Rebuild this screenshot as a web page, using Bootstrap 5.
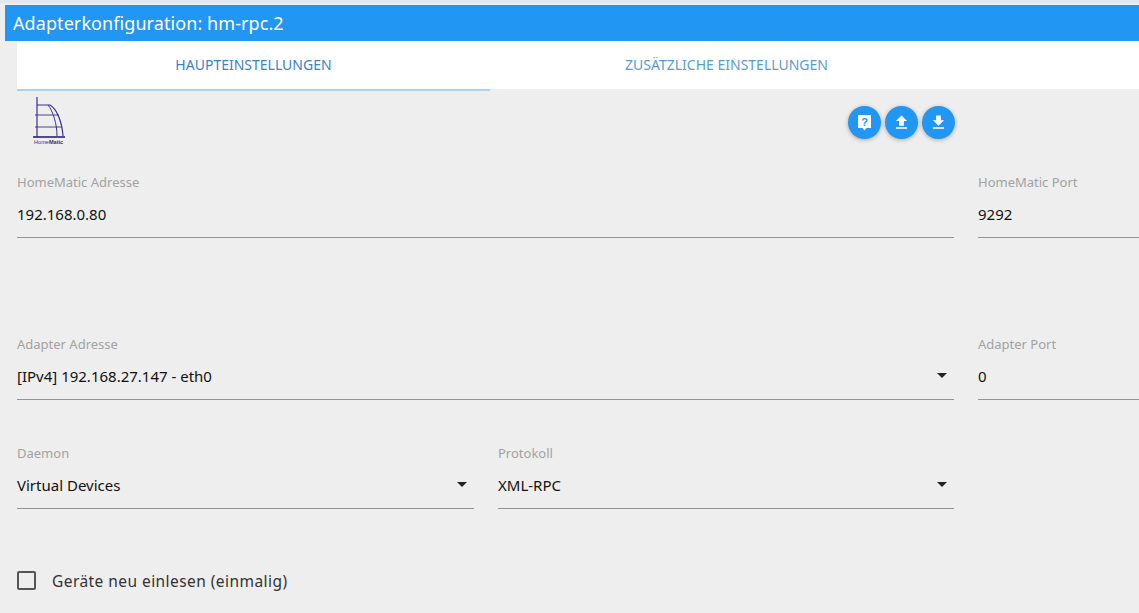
<!DOCTYPE html>
<html lang="de">
<head>
<meta charset="utf-8">
<title>Adapterkonfiguration</title>
<link rel="stylesheet" href="https://cdn.jsdelivr.net/npm/bootstrap@5.3.0/dist/css/bootstrap.min.css">
<style>
html,body{height:613px;overflow:hidden}
body{background:#eee;font-family:"Noto Sans","Open Sans",sans-serif;color:#111;border-top:3px solid #e4e8ec;padding-top:2px}
.cfg-head{margin-left:5px;height:36px;background:#2196f3;color:#fff;font-size:18px;line-height:36px;padding-left:8px;letter-spacing:.08px}
.cfg-body{padding-left:17px;width:1163px}
.cfg-tabs{background:#fff;height:48px;display:grid;grid-template-columns:473px 473px 1fr}
.cfg-tab{font-size:14px;text-align:center;line-height:48px;text-transform:uppercase}
.cfg-tab.on{color:#3b82bf;border-bottom:2px solid #a9d3ea}
.cfg-tab.off{color:#5a9bd0}
.cfg-logo-row{height:64px;width:938px}
.cfg-logo{margin-left:13px;padding-top:7px}
.cfg-fabs{padding-top:17px;gap:4px}
.cfg-fab{width:33px;height:33px;border-radius:50%;background:#2196f3;box-shadow:0 1px 4px rgba(0,0,0,.3);display:flex;align-items:center;justify-content:center;border:0;padding:0}
.cfg-grid{display:grid;grid-template-columns:457px 456px 162px;column-gap:24px}
.cfg-field{display:flex;flex-direction:column}
.cfg-label{font-size:13px;color:#a2a2a2;line-height:16px;height:16px}
.cfg-val{height:48px;border-bottom:1px solid #949494;font-size:15px;line-height:48px;position:relative;color:#111}
.cfg-caret{position:absolute;right:7px;top:21px;width:0;height:0;border-left:5px solid transparent;border-right:5px solid transparent;border-top:5px solid #222}
.cfg-wide{grid-column:span 2}
.cfg-r1{margin-top:21px}
.cfg-r2{margin-top:98px}
.cfg-r3{margin-top:45px}
.cfg-check{margin-top:58px;display:flex;align-items:center;gap:16px;font-size:15.5px;color:#333;letter-spacing:.44px}
.cfg-check-text{padding-top:3px}
.cfg-box{width:19px;height:19px;border:2px solid #555;border-radius:2px;flex:none}
</style>
</head>
<body>
<div class="cfg-head">Adapterkonfiguration: hm-rpc.2</div>
<div class="cfg-body">
  <div class="cfg-tabs">
    <div class="cfg-tab on">Haupteinstellungen</div>
    <div class="cfg-tab off">Zusätzliche Einstellungen</div>
    <div></div>
  </div>
  <div class="d-flex justify-content-between cfg-logo-row">
    <div class="cfg-logo">
      <svg class="d-block" width="36" height="52" viewBox="0 0 36 52" fill="none" stroke="#3a2f86">
        <path d="M7 1V41" stroke-width="1.2"/>
        <path d="M7 9H20C27 13 32 26 33 40" stroke-width="1.2"/>
        <path d="M18 9C23 15 27 28 27 40" stroke-width="1"/>
        <path d="M5 19H29M5 31H32" stroke-width=".9"/>
        <path d="M3 41H35" stroke-width="1.6" stroke="#2b2270"/>
        <text x="4" y="48" font-size="5.6" fill="#3a2f86" stroke="none" font-family="Liberation Sans">Home<tspan font-weight="700">Matic</tspan></text>
      </svg>
    </div>
    <div class="d-flex cfg-fabs align-items-start">
      <button class="cfg-fab" aria-label="Hilfe"><svg width="19" height="19" viewBox="0 0 19 19"><path d="M3 2H16V15H11.5L9.5 17.5L7.5 15H3Z" fill="#fff"/><text x="9.5" y="12.5" text-anchor="middle" font-size="11" font-weight="700" fill="#2196f3" font-family="Liberation Sans">?</text></svg></button>
      <button class="cfg-fab" aria-label="Hochladen"><svg width="19" height="19" viewBox="0 0 24 24"><path d="M9 16h6v-6h4l-7-7-7 7h4zM5 18h14v2H5z" fill="#fff"/></svg></button>
      <button class="cfg-fab" aria-label="Herunterladen"><svg width="19" height="19" viewBox="0 0 24 24"><path d="M19 9h-4V3H9v6H5l7 7 7-7zM5 18v2h14v-2H5z" fill="#fff"/></svg></button>
    </div>
  </div>
  <div class="cfg-grid cfg-r1">
    <div class="cfg-field cfg-wide"><div class="cfg-label">HomeMatic Adresse</div><div class="cfg-val">192.168.0.80</div></div>
    <div class="cfg-field"><div class="cfg-label">HomeMatic Port</div><div class="cfg-val">9292</div></div>
  </div>
  <div class="cfg-grid cfg-r2">
    <div class="cfg-field cfg-wide"><div class="cfg-label">Adapter Adresse</div><div class="cfg-val">[IPv4] 192.168.27.147 - eth0<span class="cfg-caret"></span></div></div>
    <div class="cfg-field"><div class="cfg-label">Adapter Port</div><div class="cfg-val">0</div></div>
  </div>
  <div class="cfg-grid cfg-r3">
    <div class="cfg-field"><div class="cfg-label">Daemon</div><div class="cfg-val">Virtual Devices<span class="cfg-caret"></span></div></div>
    <div class="cfg-field"><div class="cfg-label">Protokoll</div><div class="cfg-val">XML-RPC<span class="cfg-caret"></span></div></div>
  </div>
  <div class="cfg-check"><span class="cfg-box"></span><span class="cfg-check-text">Geräte neu einlesen (einmalig)</span></div>
</div>
<script src="https://cdn.jsdelivr.net/npm/bootstrap@5.3.0/dist/js/bootstrap.bundle.min.js"></script>
</body>
</html>
